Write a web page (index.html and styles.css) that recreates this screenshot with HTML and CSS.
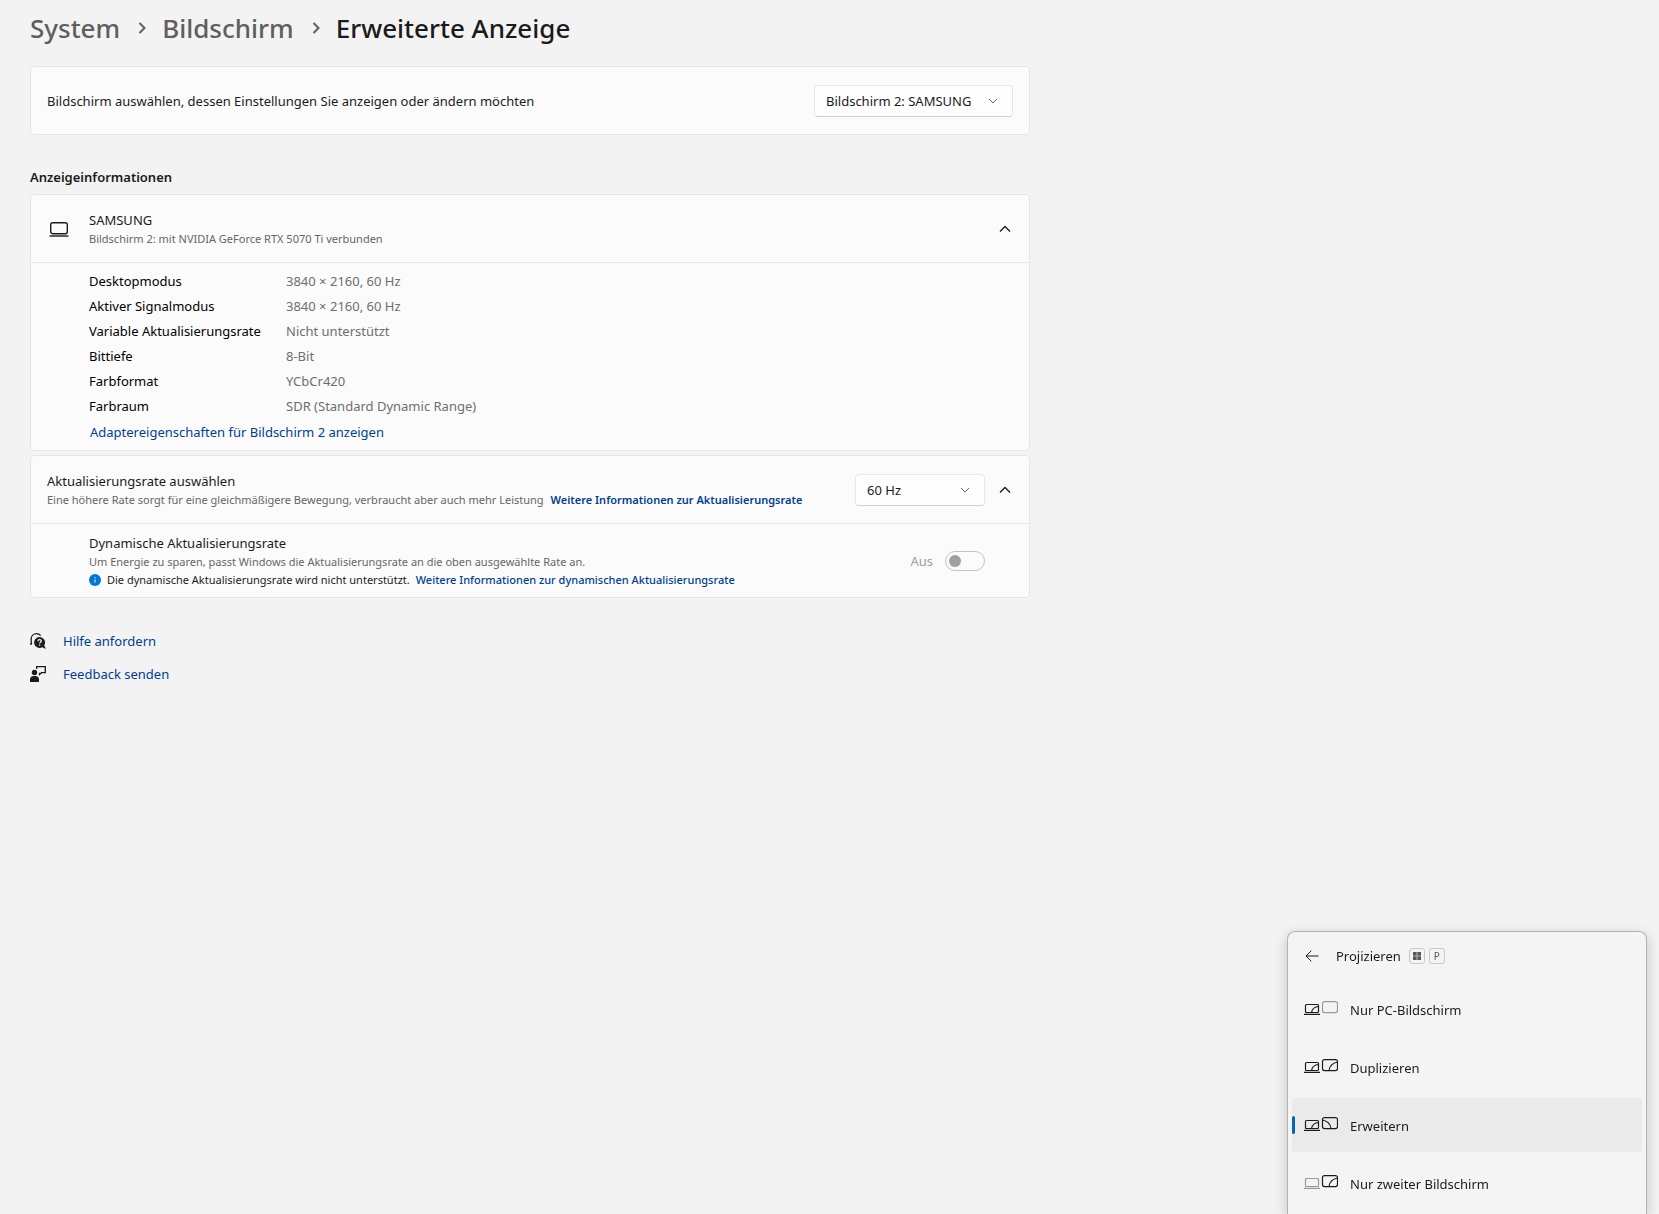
FILE: index.html
```html
<!DOCTYPE html>
<html lang="de">
<head>
    <meta charset="UTF-8">
    <meta name="viewport" content="width=device-width, initial-scale=1">
    <title>Erweiterte Anzeige</title>

    <link rel="stylesheet" href="styles.css">

</head>
<body>

<!-- shared icons -->
<svg class="sprite" aria-hidden="true">
    <symbol id="chevron-down" viewBox="0 0 10 10"><path d="M1 3l4 4 4-4"/></symbol>
    <symbol id="chevron-up" viewBox="0 0 12 12"><path d="M1 8.500l5-5 5 5"/></symbol>
</svg>

<main class="page">

    <nav class="breadcrumb" aria-label="Navigationspfad">
        <a href="#system">System</a>
        <svg viewBox="0 0 8 12"><path d="M1.500 1l5 5-5 5"/></svg>
        <a href="#bildschirm">Bildschirm</a>
        <svg viewBox="0 0 8 12"><path d="M1.500 1l5 5-5 5"/></svg>
        <h1>Erweiterte Anzeige</h1>
    </nav>

    <section class="card">
        <div class="card-head">
            <label class="grow" for="display">Bildschirm auswählen, dessen Einstellungen Sie anzeigen oder ändern möchten</label>
            <div class="dropdown dropdown-wide">
                <select id="display">
                    <option>Bildschirm 1</option>
                    <option selected>Bildschirm 2: SAMSUNG</option>
                </select>
                <svg><use href="#chevron-down"/></svg>
            </div>
        </div>
    </section>

    <h2>Anzeigeinformationen</h2>

    <section class="card">
        <div class="card-head">
            <svg class="device" viewBox="0 0 20 16"><rect x="1.700" y="1.700" width="16.600" height="11" rx="2"/><path d="M.5 15h19"/></svg>
            <div class="grow">
                <p>SAMSUNG</p>
                <p class="small muted">Bildschirm 2: mit NVIDIA GeForce RTX 5070 Ti verbunden</p>
            </div>
            <button class="expander" aria-label="Weniger anzeigen" aria-expanded="true"><svg><use href="#chevron-up"/></svg></button>
        </div>
        <div class="card-body details">
            <table>
                <tr><th scope="row">Desktopmodus</th><td>3840 × 2160, 60 Hz</td></tr>
                <tr><th scope="row">Aktiver Signalmodus</th><td>3840 × 2160, 60 Hz</td></tr>
                <tr><th scope="row">Variable Aktualisierungsrate</th><td>Nicht unterstützt</td></tr>
                <tr><th scope="row">Bittiefe</th><td>8-Bit</td></tr>
                <tr><th scope="row">Farbformat</th><td>YCbCr420</td></tr>
                <tr><th scope="row">Farbraum</th><td>SDR (Standard Dynamic Range)</td></tr>
            </table>
            <a class="adapter" href="#adapter">Adaptereigenschaften für Bildschirm 2 anzeigen</a>
        </div>
    </section>

    <section class="card">
        <div class="card-head">
            <div class="grow">
                <label for="rate">Aktualisierungsrate auswählen</label>
                <p class="small muted">Eine höhere Rate sorgt für eine gleichmäßigere Bewegung, verbraucht aber auch mehr Leistung <a class="strong" href="#rate-info">Weitere Informationen zur Aktualisierungsrate</a></p>
            </div>
            <div class="dropdown">
                <select id="rate">
                    <option selected>60 Hz</option>
                    <option>30 Hz</option>
                </select>
                <svg><use href="#chevron-down"/></svg>
            </div>
            <button class="expander" aria-label="Weniger anzeigen" aria-expanded="true"><svg><use href="#chevron-up"/></svg></button>
        </div>
        <div class="card-body dynamic">
            <div class="grow">
                <p>Dynamische Aktualisierungsrate</p>
                <p class="small muted">Um Energie zu sparen, passt Windows die Aktualisierungsrate an die oben ausgewählte Rate an.</p>
                <p class="small note">
                    <svg viewBox="0 0 12 12"><circle cx="6" cy="6" r="6"/><path d="M6 5.500v3M6 3v1.200"/></svg>
                    <span>Die dynamische Aktualisierungsrate wird nicht unterstützt.</span>
                    <a href="#dynamic-info">Weitere Informationen zur dynamischen Aktualisierungsrate</a>
                </p>
            </div>
            <label class="off" for="dynamic">Aus</label>
            <input class="toggle" id="dynamic" type="checkbox" role="switch" disabled>
        </div>
    </section>

    <div class="links">
        <a href="#hilfe">
            <svg viewBox="0 0 16 16">
                <path class="line" d="M1.200 9.500V6C1.200 3 3.500.7 6.500.7c1.800 0 3.200.7 4.200 2M0 11h1.200l.5-1.500"/>
                <path d="M9.500 4a5.500 5.500 0 0 1 4.700 8.400L16 16l-3.700-1.700A5.500 5.500 0 1 1 9.500 4z"/>
                <path class="cut" d="M7.900 8.200c0-1 .7-1.600 1.700-1.600s1.700.6 1.700 1.500c0 1.200-1.700 1.200-1.700 2.500M9.600 11.600v1.100"/>
            </svg>
            <span>Hilfe anfordern</span>
        </a>
        <a href="#feedback">
            <svg viewBox="0 0 16 16">
                <path class="line" d="M6.700 3V.7h8.600v6h-3.800L9.500 8.500V6.700"/>
                <circle cx="4.500" cy="6.500" r="2.700"/>
                <path d="M0 16v-2.500C0 11.500 1.500 10 3.500 10h2C7.500 10 9 11.500 9 13.500V16z"/>
            </svg>
            <span>Feedback senden</span>
        </a>
    </div>

</main>

<!-- Win + P flyout -->
<aside class="flyout" aria-label="Projizieren">
    <div class="flyout-head">
        <button class="back" aria-label="Zurück"><svg viewBox="0 0 14 12"><path d="M13.500 6H1M6.300.7L1 6l5.300 5.300"/></svg></button>
        <span>Projizieren</span>
        <kbd><svg viewBox="0 0 8 8"><path d="M0 0h3.700v3.700H0zM4.300 0H8v3.700H4.300zM0 4.300h3.700V8H0zM4.300 4.300H8V8H4.300z"/></svg></kbd>
        <kbd>P</kbd>
    </div>
    <button class="mode">
        <svg viewBox="0 0 34 14">
            <path d="M1.500 10.500v-6q0-1 1-1h11q1 0 1 1v6q0 1-1 1h-11q-1 0-1-1M0 13.400h16M7.500 11.500q1-5.500 7-6"/>
            <rect class="idle" x="18.500" y=".6" width="15" height="11" rx="2"/>
        </svg>
        <span>Nur PC-Bildschirm</span>
    </button>
    <button class="mode">
        <svg viewBox="0 0 34 14">
            <path d="M1.500 10.500v-6q0-1 1-1h11q1 0 1 1v6q0 1-1 1h-11q-1 0-1-1M0 13.400h16M7.500 11.500q1-5.500 7-6"/>
            <rect x="18.500" y=".6" width="15" height="11" rx="2"/>
            <path d="M25 11.500q1-7 8.500-8.500"/>
        </svg>
        <span>Duplizieren</span>
    </button>
    <button class="mode active" aria-pressed="true">
        <svg viewBox="0 0 34 14">
            <path d="M1.500 10.500v-6q0-1 1-1h11q1 0 1 1v6q0 1-1 1h-11q-1 0-1-1M0 13.400h16M7.500 11.500q1-5.500 7-6"/>
            <rect x="18.500" y=".6" width="15" height="11" rx="2"/>
            <path d="M27 11.500q-1-7-8.500-8.500"/>
        </svg>
        <span>Erweitern</span>
    </button>
    <button class="mode">
        <svg viewBox="0 0 34 14">
            <path class="idle" d="M1.500 10.500v-6q0-1 1-1h11q1 0 1 1v6q0 1-1 1h-11q-1 0-1-1M0 13.400h16"/>
            <rect x="18.500" y=".6" width="15" height="11" rx="2"/>
            <path d="M25 11.500q1-7 8.500-8.500"/>
        </svg>
        <span>Nur zweiter Bildschirm</span>
    </button>
</aside>

</body>
</html>
```

FILE: styles.css
```css
* {
    box-sizing: border-box;
}

body {
    margin: 0;
    background-color: #f3f3f3;
    color: #1b1b1b;
    font-family: "Segoe UI", "Noto Sans", "Open Sans", sans-serif;
    font-size: 13px;
    line-height: 20px;
}

p, h1, h2 {
    margin: 0;
}

a {
    color: #003e92;
    text-decoration: none;
}

a:hover {
    text-decoration: underline;
}

button, select, kbd {
    font: inherit;
    color: inherit;
}

svg {
    display: block;
    flex: none;
    fill: none;
    stroke: currentColor;
}

.sprite {
    display: none;
}

.page {
    max-width: 1060px;
    padding: 8px 30px;
}

.grow {
    flex: 1;
}

.small {
    font-size: 11px;
    line-height: 18px;
}

.muted {
    color: #666;
}

/* breadcrumb */

.breadcrumb {
    display: flex;
    align-items: center;
    gap: 16px;
    margin-bottom: 18px;
    font-size: 26px;
    font-weight: 500;
    line-height: 40px;
}

.breadcrumb a {
    color: #5f5f5f;
}

.breadcrumb h1 {
    font-size: inherit;
    font-weight: inherit;
}

.breadcrumb svg {
    width: 8px;
    height: 12px;
    margin-left: 2px;
    color: #5f5f5f;
    stroke-width: 2;
}

/* cards */

h2 {
    margin: 32px 0 7px;
    font-size: 13px;
    font-weight: 600;
}

.card {
    margin-bottom: 4px;
    background-color: #fbfbfb;
    border: 1px solid #e5e5e5;
    border-radius: 4px;
}

.card-head {
    display: flex;
    align-items: center;
    min-height: 67px;
    padding: 0 16px;
}

.device {
    width: 20px;
    height: 16px;
    margin: 0 20px 0 2px;
    stroke-width: 1.4;
}

.expander {
    margin: 0 2px 0 14px;
    padding: 0;
    background: none;
    border: none;
}

.expander svg {
    width: 12px;
    height: 12px;
    stroke-width: 1.3;
}

.card-body {
    padding-left: 58px;
    border-top: 1px solid #e5e5e5;
}

/* drop-downs: chevron shares the grid cell with the select */

.dropdown {
    display: grid;
    align-items: center;
    width: 130px;
}

.dropdown-wide {
    width: 199px;
}

.dropdown select {
    grid-area: 1 / 1;
    width: 100%;
    height: 32px;
    padding: 0 11px;
    appearance: none;
    background-color: #fefefe;
    border: 1px solid #e8e8e8;
    border-bottom-color: #cfcfcf;
    border-radius: 4px;
}

.dropdown svg {
    grid-area: 1 / 1;
    justify-self: end;
    width: 10px;
    height: 10px;
    margin-right: 15px;
    color: #666;
    pointer-events: none;
}

/* display details */

.details {
    padding-top: 5px;
    padding-bottom: 8px;
}

.details table {
    border-collapse: collapse;
}

.details th, .details td {
    height: 25px;
    padding: 0;
    text-align: left;
    font-weight: 400;
}

.details th {
    width: 197px;
    color: #000;
}

.details td {
    color: #6e6e6e;
}

.adapter {
    display: block;
    width: fit-content;
    margin: 4px 0 0 1px;
}

/* dynamic refresh rate */

.dynamic {
    display: flex;
    align-items: center;
    padding: 9px 44px 8px 58px;
}

.note {
    display: flex;
    align-items: center;
    gap: 6px;
}

.note a {
    font-weight: 500;
}

.note svg {
    width: 12px;
    height: 12px;
    fill: #0078d4;
    stroke: none;
}

.note svg path {
    stroke: #fff;
}

.off {
    margin-right: 12px;
    color: #9d9d9d;
}

.toggle {
    display: flex;
    align-items: center;
    width: 40px;
    height: 20px;
    margin: 0;
    padding: 0 3px;
    appearance: none;
    border: 1px solid #c3c3c3;
    border-radius: 10px;
}

.toggle::before {
    content: "";
    width: 12px;
    height: 12px;
    background-color: #a0a0a0;
    border-radius: 50%;
}

.strong {
    margin-left: 4px;
    font-weight: 600;
}

/* help links */

.links {
    display: grid;
    justify-items: start;
    gap: 13px;
    margin-top: 33px;
}

.links a {
    display: flex;
    align-items: center;
    gap: 17px;
}

.links svg {
    width: 16px;
    height: 16px;
    fill: #1b1b1b;
    stroke: none;
}

.links .line {
    fill: none;
    stroke: #1b1b1b;
    stroke-width: 1.3;
}

.links .cut {
    fill: none;
    stroke: #f3f3f3;
    stroke-width: 1.3;
}

/* project flyout */

.flyout {
    position: fixed;
    right: 12px;
    bottom: 0;
    width: 360px;
    padding: 0 4px;
    background-color: #f4f4f4;
    border: 1px solid #b4b4b4;
    border-bottom: none;
    border-radius: 8px 8px 0 0;
    box-shadow: 0 4px 14px rgba(0, 0, 0, 0.2);
}

.flyout-head {
    display: flex;
    align-items: center;
    height: 47px;
    margin-bottom: 3px;
    padding-left: 13px;
}

.back {
    margin-right: 17px;
    padding: 0;
    background: none;
    border: none;
}

.back svg {
    width: 14px;
    height: 12px;
}

kbd {
    display: grid;
    place-items: center;
    width: 16px;
    height: 16px;
    margin-left: 4px;
    color: #5a5a5a;
    font-size: 10px;
    line-height: 14px;
    border: 1px solid #c8c8c8;
    border-radius: 3px;
}

span + kbd {
    margin-left: 8px;
}

kbd svg {
    width: 8px;
    height: 8px;
    fill: currentColor;
    stroke: none;
}

.mode {
    display: flex;
    align-items: center;
    gap: 12px;
    width: 100%;
    height: 54px;
    margin-bottom: 4px;
    padding: 0 12px;
    background: none;
    border: none;
    border-radius: 4px;
}

.mode svg {
    width: 34px;
    height: 14px;
    margin-bottom: 2px;
    stroke-width: 1.2;
}

.mode span {
    padding-top: 1px;
}

.mode .idle {
    stroke: #999;
}

.mode.active {
    padding-left: 0;
    gap: 0;
    background-color: #eaeaea;
}

.mode.active::before {
    content: "";
    width: 3px;
    height: 18px;
    margin-right: 9px;
    background-color: #0067c0;
    border-radius: 2px;
}

.mode.active span {
    margin-left: 12px;
}
```
